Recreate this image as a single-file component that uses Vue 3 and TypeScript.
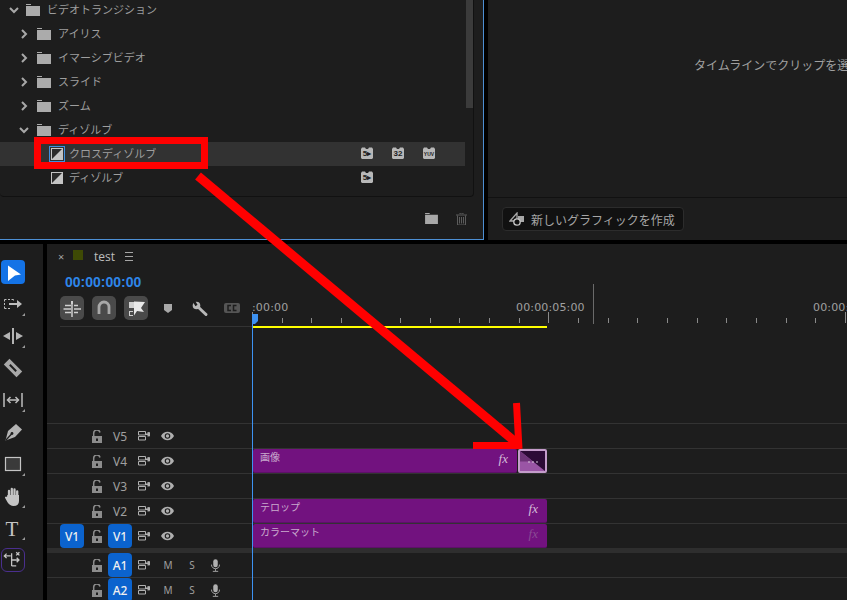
<script setup lang="ts">
interface TreeRow { label: string; level: number; kind: 'open' | 'closed' | 'fx'; selected?: boolean; badges?: string[] }
const tree: TreeRow[] = [
  { label: 'ビデオトランジション', level: 0, kind: 'open' },
  { label: 'アイリス', level: 1, kind: 'closed' },
  { label: 'イマーシブビデオ', level: 1, kind: 'closed' },
  { label: 'スライド', level: 1, kind: 'closed' },
  { label: 'ズーム', level: 1, kind: 'closed' },
  { label: 'ディゾルブ', level: 1, kind: 'open' },
  { label: 'クロスディゾルブ', level: 2, kind: 'fx', selected: true, badges: ['accel', '32', 'YUV'] },
  { label: 'ディゾルブ', level: 2, kind: 'fx', badges: ['accel'] },
]
const tools = [
  { id: 'select', active: true },
  { id: 'track', corner: true },
  { id: 'ripple', corner: true },
  { id: 'razor' },
  { id: 'slip', corner: true },
  { id: 'pen' },
  { id: 'rect', corner: true },
  { id: 'hand', corner: true },
  { id: 'text', corner: true },
  { id: 'mogrt', ring: true },
]
const tickCount = 20
const isLong = (i: number) => i % 10 === 0
const videoTracks = [
  { name: 'V5' }, { name: 'V4' }, { name: 'V3' }, { name: 'V2' }, { name: 'V1', on: true, src: true },
]
const audioTracks = ['A1', 'A2']
</script>

<template>
  <div class="screen">
    <svg class="defs" width="0" height="0" aria-hidden="true">
      <symbol id="folder" viewBox="0 0 14 12"><path d="M0 0h5v1H0zM0 2h14v10H0z" fill="currentColor" /></symbol>
      <symbol id="down" viewBox="0 0 10 10"><path d="M1 3l4 4 4-4" fill="none" stroke="currentColor" stroke-width="2" /></symbol>
      <symbol id="right" viewBox="0 0 10 10"><path d="M3 1l4 4-4 4" fill="none" stroke="currentColor" stroke-width="2" /></symbol>
      <symbol id="fx" viewBox="0 0 12 12"><rect width="12" height="12" fill="#c4c4c4" /><path d="M1 1h10L1 11z" fill="#2a2a2a" /></symbol>
      <symbol id="badge" viewBox="0 0 12 12"><path d="M0 2l1-1.500h3l1 1.500h2l1-1.500h3l1 1.500v9l-1 1H1l-1-1z" fill="#b8b8b8" /></symbol>
      <symbol id="lock" viewBox="0 0 10 13"><path d="M1.700 6V3.500a3.200 3.200 0 0 1 6.300-1" fill="none" stroke="currentColor" stroke-width="1.500" /><path d="M0 6h10v7H0z" fill="currentColor" /><path d="M4 8.500h2v2.500H4z" fill="#1d1d1d" /></symbol>
      <symbol id="film" viewBox="0 0 12 10"><path d="M.5 .5h7v3.500h-7zM.5 5.500h7v3.500h-7z" fill="none" stroke="currentColor" /><path d="M8 2.500h1.500V1L12 1.200v4.100L9.500 5.500V4H8z" fill="currentColor" /></symbol>
      <symbol id="eye" viewBox="0 0 14 10"><path d="M0 5c3-6 11-6 14 0-3 6-11 6-14 0z" fill="currentColor" /><circle cx="7" cy="5" r="3" fill="#1d1d1d" /><circle cx="7" cy="5" r="1.800" fill="currentColor" /></symbol>
      <symbol id="mic" viewBox="0 0 10 14"><rect x="2.500" width="5" height="9" rx="2.500" fill="currentColor" /><path d="M.5 6c0 6 9 6 9 0M5 11v2M2 13.500h6" fill="none" stroke="currentColor" /></symbol>
    </svg>

    <div class="top">
      <section class="effects">
        <div class="tree">
          <div class="tree-list">
            <div v-for="row in tree" :key="row.label + row.level" class="row" :class="[`lv${row.level}`, { selected: row.selected }]">
              <template v-if="row.kind !== 'fx'">
                <svg class="chev"><use :href="row.kind === 'open' ? '#down' : '#right'" /></svg>
                <svg class="folder"><use href="#folder" /></svg>
              </template>
              <svg v-else class="fxicon" :class="{ ringed: row.selected }"><use href="#fx" /></svg>
              <span class="label">{{ row.label }}</span>
              <div v-if="row.badges" class="badges">
                <span v-for="b in row.badges" :key="b" class="badge">
                  <svg class="badge-bg"><use href="#badge" /></svg>
                  <span class="badge-text" :class="{ tiny: b === 'YUV' }">
                    <template v-if="b === 'accel'">5▸</template><template v-else>{{ b }}</template>
                  </span>
                </span>
              </div>
            </div>
          </div>
          <div class="scrolltrack"><div class="thumb"></div></div>
        </div>
        <div class="foot">
          <svg class="foot-folder"><use href="#folder" /></svg>
          <svg class="trash" viewBox="0 0 11 12"><path d="M0 2h11M4 1V0h3v1M1.500 2.500V12h8V2.500M3.500 4v6.500M5.500 4v6.500M7.500 4v6.500" fill="none" stroke="currentColor" /></svg>
        </div>
      </section>
      <section class="monitor">
        <div class="monitor-view"><span class="hint">タイムラインでクリップを選択して編集します</span></div>
        <div class="monitor-foot">
          <button class="newgfx" type="button">
            <svg class="shapes" viewBox="0 0 16 14"><path d="M1 9L8 1v8z" fill="none" stroke="#a8a8a8" stroke-width="1.300" /><rect x="9" y="4" width="6" height="6" fill="#a8a8a8" /><circle cx="8" cy="10" r="3.200" fill="#111" stroke="#c8c8c8" stroke-width="1.300" /></svg>
            <span>新しいグラフィックを作成</span>
          </button>
        </div>
      </section>
    </div>

    <div class="bottom">
      <aside class="tools">
        <div v-for="t in tools" :key="t.id" class="tool" :class="{ active: t.active, ring: t.ring, corner: t.corner }">
          <svg viewBox="0 0 24 24" class="tool-icon">
            <path v-if="t.id === 'select'" d="M7 5.500L20 14.500 14 15.500 7 21z" fill="#fff" />
            <g v-else-if="t.id === 'track'">
              <path d="M3.500 7.500h9M3.500 7.500v9M3.500 16.500h7M12.500 7.500v1" fill="none" stroke="#bdbdbd" stroke-dasharray="2 1.500" />
              <path d="M8 11h8V8l5 4-5 4v-3H8z" fill="#bdbdbd" />
            </g>
            <path v-else-if="t.id === 'ripple'" d="M11 4h2v16h-2zM2 12l7-4v8zM22 12l-7-4v8z" fill="#b4b4b4" />
            <g v-else-if="t.id === 'razor'" transform="rotate(-45 12 12)">
              <rect x="8" y="3" width="8" height="18" fill="#a8a8a8" />
              <rect x="11" y="7.500" width="2" height="9" fill="#1d1d1d" />
            </g>
            <g v-else-if="t.id === 'slip'" fill="none" stroke="#bdbdbd" stroke-width="1.500">
              <path d="M3 5v14M21 5v14M7 12h10" /><path d="M9.500 9L6.500 12l3 3M14.500 9l3 3-3 3" />
            </g>
            <g v-else-if="t.id === 'pen'">
              <path d="M4.500 20.500L7 11 15 4l6 5.500L14 17z" fill="#b4b4b4" />
              <path d="M5 20l5.500-6" stroke="#1d1d1d" stroke-width="1.200" /><circle cx="11" cy="13.500" r="1.400" fill="#1d1d1d" />
            </g>
            <rect v-else-if="t.id === 'rect'" x="4.500" y="5.500" width="15" height="13" fill="#3a3a3a" stroke="#c4c4c4" stroke-width="1.200" />
            <g v-else-if="t.id === 'hand'" stroke="#c4c4c4" fill="none" stroke-linecap="round">
              <path d="M8 13V7M10.800 12V5M13.500 12V5.500M16.200 13V7.500" stroke-width="2.300" />
              <path d="M7 12h10v5c0 2.500-2 4-4.500 4S8.500 19.500 7.500 18L5 13.500" fill="#c4c4c4" stroke-width="2" />
            </g>
            <text v-else-if="t.id === 'text'" x="4.500" y="20" class="t-glyph">T</text>
            <g v-else-if="t.id === 'mogrt'" fill="none" stroke="#c4c4c4" stroke-width="1.400">
              <path d="M2.500 7.500h7M5 5L2.500 7.500 5 10M10.500 4.500v14M10.500 12h8M16 9.500l2.500 2.500-2.500 2.500M10.500 18.500h5M15.500 3.500l3.500 3.500M19 3.500L15.500 7" />
            </g>
          </svg>
        </div>
      </aside>

      <section class="timeline">
        <header class="title">
          <span class="close">×</span>
          <span class="swatch"></span>
          <span class="seq">test</span>
          <span class="burger"></span>
        </header>
        <div class="timecode">00:00:00:00</div>

        <div class="toolbar">
          <div class="tbuttons">
            <span class="tb on">
              <svg viewBox="0 0 24 24"><path d="M12 5v3" stroke="#d0d0d0" stroke-width="2" /><path d="M12 8v13M5 9.500h6M14 9.500h4M3.500 13h7.500M14 13h7M5 16.500h6M14 16.500h4" stroke="#d0d0d0" stroke-width="1.500" fill="none" /></svg>
            </span>
            <span class="tb on">
              <svg viewBox="0 0 24 24"><path d="M7 18v-7a5 5 0 0 1 10 0v7" fill="none" stroke="#a8a8a8" stroke-width="2.800" /></svg>
            </span>
            <span class="tb on">
              <svg viewBox="0 0 24 24"><path d="M5 6h5v6H5zM5 15h1v5H5zM5 15h4v1H5zM5 19h4v1H5z" fill="#d0d0d0" /><path d="M10 5.500l11 .5-4 6 3 4-7-1-3 4.500z" fill="#e8e8e8" /></svg>
            </span>
            <span class="tb">
              <svg viewBox="0 0 24 24"><path d="M8 8h8v6l-4 3-4-3z" fill="#a8a8a8" /></svg>
            </span>
            <span class="tb">
              <svg viewBox="0 0 24 24"><path d="M8.500 9.500L18 18.500" stroke="#b8b8b8" stroke-width="3" stroke-linecap="round" /><circle cx="8.500" cy="9.500" r="3.800" fill="#b8b8b8" /><path d="M8.500 9.500L6 5.500" stroke="#1d1d1d" stroke-width="2.400" /></svg>
            </span>
            <span class="tb">
              <svg viewBox="0 0 24 24"><rect x="4" y="7" width="16" height="10" rx="2" fill="#555" /><path d="M11 9.500H8v5h3M16.500 9.500h-3v5h3" stroke="#1d1d1d" stroke-width="1.500" fill="none" /></svg>
            </span>
          </div>
          <div class="ruler">
            <div class="stamps">
              <span class="stamp first">:00:00</span>
              <span class="stamp second">00:00:05:00</span>
              <span class="stamp third">00:00:10:00</span>
            </div>
            <div class="workarea"></div>
            <div class="ticks">
              <span v-for="i in tickCount + 1" :key="i" class="tick-cell">
                <span class="tick" :class="{ long: isLong(i - 1) }"></span>
              </span>
            </div>
            <span class="zoomline"></span>
            <span class="playhead-head"></span>
          </div>
        </div>

        <div class="stage"></div>

        <div class="tracks">
          <div v-for="t in videoTracks" :key="t.name" class="track">
            <div class="thead">
              <span class="srcslot"><span v-if="t.src" class="patch">V1</span></span>
              <svg class="lock"><use href="#lock" /></svg>
              <span class="tname" :class="{ patch: t.on }">{{ t.name }}</span>
              <svg class="film"><use href="#film" /></svg>
              <svg class="eye"><use href="#eye" /></svg>
            </div>
            <div class="lane">
              <template v-if="t.name === 'V4'">
                <div class="clip short"><span class="clip-name">画像</span><i class="fx">fx</i></div>
                <div class="transition">
                  <svg viewBox="0 0 25 20" preserveAspectRatio="none"><rect width="25" height="20" fill="#2c0a36" /><path d="M0 0l25 20H0z" fill="#9a55a5" /><path d="M0 0l13 10.500H0z" fill="#6e3478" /><path d="M8 11h2M12 11h2M16 11h2" stroke="#d8c8dc" stroke-width="1" /></svg>
                </div>
              </template>
              <div v-if="t.name === 'V2'" class="clip"><span class="clip-name">テロップ</span><i class="fx">fx</i></div>
              <div v-if="t.name === 'V1'" class="clip"><span class="clip-name">カラーマット</span><i class="fx dim">fx</i></div>
            </div>
          </div>
          <div class="band"></div>
          <div v-for="a in audioTracks" :key="a" class="track audio">
            <div class="thead">
              <span class="srcslot"></span>
              <svg class="lock"><use href="#lock" /></svg>
              <span class="tname patch">{{ a }}</span>
              <svg class="film"><use href="#film" /></svg>
              <span class="ms">M</span>
              <span class="ms">S</span>
              <svg class="mic"><use href="#mic" /></svg>
            </div>
            <div class="lane"></div>
          </div>
        </div>
        <span class="playhead"></span>
      </section>
    </div>

    <svg class="annotation" viewBox="0 0 847 600">
      <rect x="37.500" y="140.500" width="167" height="25" fill="none" stroke="#ff0000" stroke-width="7" />
      <path d="M198 176L519 445" fill="none" stroke="#ff0000" stroke-width="9" />
      <path d="M473 445.500H522M516.500 403L519 449" fill="none" stroke="#ff0000" stroke-width="7" />
    </svg>
  </div>
</template>

<style scoped>
.screen {
  position: relative;
  width: 847px;
  height: 600px;
  overflow: hidden;
  background: #000;
  color: #a6a6a6;
  font-family: "Noto Sans CJK JP", "Noto Sans", sans-serif;
  font-size: 12px;
  display: flex;
  flex-direction: column;
}
.defs { position: absolute; }
svg { display: block; }

.top { height: 244px; display: flex; flex: none; padding-bottom: 4px; box-sizing: border-box; gap: 4px; }
.effects {
  width: 484px; flex: none; box-sizing: border-box; height: 240px;
  background: #1d1d1d; border-right: 1px solid #4d8fd4; border-bottom: 1px solid #4d8fd4;
  display: flex; flex-direction: column;
}
.tree {
  height: 197px; flex: none; box-sizing: border-box; display: flex; overflow: hidden;
  width: 474px; border-right: 1px solid #111; border-bottom: 1px solid #111; border-bottom-right-radius: 4px; border-bottom-left-radius: 4px;
}
.tree-list { width: 465px; flex: none; margin-top: -2px; }
.scrolltrack { flex: 1; display: flex; justify-content: center; }
.thumb { width: 7px; height: 108px; background: #3b3b3b; }
.row { height: 24px; display: flex; align-items: center; color: #9e9e9e; font-size: 11px; }
.row.selected { background: #323232; }
.chev { width: 10px; height: 10px; color: #a8a8a8; flex: none; }
.folder { width: 14px; height: 12px; color: #ababab; flex: none; margin-left: 6px; margin-right: 7px; }
.lv0 { padding-left: 9px; }
.lv1 { padding-left: 19px; }
.lv2 { padding-left: 51px; }
.lv0 .folder { margin-left: 7px; }
.lv1 .folder { margin-left: 8px; }
.fxicon { width: 12px; height: 12px; flex: none; margin-right: 6px; }
.fxicon.ringed { outline: 1px solid #3f8fe0; outline-offset: 1px; }
.label { white-space: nowrap; line-height: 1; margin-top: -2px; }
.badges { margin-left: auto; margin-right: 30px; display: flex; gap: 19px; }
.row:not(.selected) .badges { margin-right: 92px; }
.badge { position: relative; width: 12px; height: 12px; display: block; margin-top: -2px; }
.badge-bg { width: 12px; height: 12px; }
.badge-text {
  position: absolute; inset: 2px 0 0; text-align: center; color: #1d1d1d; font: 700 8px/10px "Liberation Sans", sans-serif; white-space: nowrap;
}
.badge-text.tiny { font-size: 5px; }
.foot { flex: 1; display: flex; align-items: center; justify-content: flex-end; gap: 18px; padding-right: 16px; padding-top: 1px; }
.foot-folder { width: 13px; height: 11px; color: #a8a8a8; }
.trash { width: 11px; height: 12px; color: #5c5c5c; }

.monitor { flex: 1; height: 240px; background: #1d1d1d; display: flex; flex-direction: column; min-width: 0; }
.monitor-view { height: 198px; box-sizing: border-box; flex: none; border-bottom: 1px solid #111; padding: 56px 0 0 206px; overflow: hidden; white-space: nowrap; color: #a0a0a0; }
.hint { line-height: 18px; display: block; }
.monitor-foot { padding: 9px 0 0 14px; }
.newgfx {
  height: 24px; width: 182px; box-sizing: border-box; padding: 0 0 0 6px;
  background: #111; border: 1px solid #2c2c2c; border-radius: 4px;
  display: flex; align-items: center; gap: 6px; color: #a6a6a6; font: inherit; white-space: nowrap;
}
.shapes { width: 16px; height: 14px; flex: none; }

.bottom { flex: 1; display: flex; gap: 4px; min-height: 0; }
.tools { width: 43px; flex: none; background: #1d1d1d; padding: 16px 0 0 1px; box-sizing: border-box; display: flex; flex-direction: column; gap: 8px; }
.tool { width: 24px; height: 24px; flex: none; position: relative; box-sizing: border-box; border-radius: 4px; }
.tool.active { background: #1473e6; }
.tool.ring { border: 1px solid #4a2f8e; border-radius: 6px; }
.tool.corner::after {
  content: ""; position: absolute; right: 0; bottom: 0; border-style: solid; border-width: 0 0 3px 3px;
  border-color: transparent transparent #9a9a9a transparent;
}
.tool-icon { width: 24px; height: 24px; }
.tool.ring .tool-icon { width: 22px; height: 22px; }
.t-glyph { font: 400 21px "Liberation Serif", serif; fill: #c4c4c4; }

.timeline { flex: 1; background: #1d1d1d; position: relative; display: flex; flex-direction: column; min-width: 0; overflow: hidden; }
.title { height: 24px; flex: none; display: flex; align-items: center; padding-left: 11px; color: #bdbdbd; font-family: "Open Sans", sans-serif; }
.close { width: 15px; font-size: 11px; color: #a6a6a6; }
.swatch { width: 10px; height: 10px; background: #3e4a05; margin-top: -2px; }
.seq { margin-left: 11px; font-size: 12px; }
.burger { width: 8px; height: 7px; margin-left: 10px; border-top: 1px solid #a6a6a6; border-bottom: 1px solid #a6a6a6; position: relative; }
.burger::after { content: ""; position: absolute; left: 0; right: 0; top: 3px; border-top: 1px solid #a6a6a6; }
.timecode { height: 28px; flex: none; box-sizing: border-box; padding: 4px 0 0 18px; color: #2e86ea; font: 700 14px/20px "Liberation Sans", sans-serif; }
.toolbar { height: 32px; flex: none; display: flex; }
.tbuttons { flex: none; box-sizing: border-box; margin-left: 13px; width: 192px; height: 31px; border-bottom: 1px solid #333; display: flex; gap: 8px; }
.tb { width: 24px; height: 24px; border-radius: 5px; display: block; flex: none; }
.tb.on { background: #4a4a4a; }
.tb svg { width: 24px; height: 24px; }
.ruler { flex: 1; position: relative; }
.stamps { display: flex; height: 18px; margin-top: 3px; color: #a0a0a0; font: 11px/18px "DejaVu Sans", sans-serif; white-space: nowrap; letter-spacing: .15px; }
.stamp { display: block; }
.stamp.first { width: 264px; box-sizing: border-box; }
.stamp.second { width: 297px; }
.workarea { position: absolute; left: 1px; top: 30px; width: 294px; height: 2px; background: #ffff00; }
.ticks { position: absolute; left: 0; top: 16px; display: flex; align-items: flex-end; height: 11px; }
.tick-cell { width: 29.650px; flex: none; height: 11px; display: flex; align-items: flex-end; }
.tick { width: 1px; height: 5px; background: #8a8a8a; display: block; }
.tick.long { height: 11px; }
.zoomline { position: absolute; left: 341px; top: -12px; width: 1px; height: 40px; background: #6a6a6a; }
.playhead-head { position: absolute; left: 0; top: 18px; width: 6px; height: 10px; background: #3d92f2; clip-path: polygon(0 0, 100% 0, 100% 70%, 50% 100%, 0 100%); }
.stage { height: 95px; flex: none; }
.tracks { flex: none; }
.track { height: 25px; box-sizing: border-box; border-top: 1px solid #333; display: flex; }
.band { height: 5px; background: #2e2e2e; }
.band + .track { border-top: 0; height: 24px; }
.thead { width: 205px; flex: none; display: flex; align-items: center; color: #a0a0a0; padding-left: 13px; box-sizing: border-box; font: 11px "Noto Sans", sans-serif; }
.srcslot { width: 24px; height: 24px; display: block; margin-right: 8px; flex: none; }
.patch { display: flex; align-items: center; justify-content: center; width: 24px; height: 24px; background: #0b63ce; border-radius: 4px; color: #f0f0f0; font: 500 12px "Noto Sans", sans-serif; }
.lock { width: 10px; height: 13px; color: #8c8c8c; flex: none; margin-right: 6px; }
.tname { width: 24px; flex: none; text-align: center; font-size: 12px; }
.tname.patch { display: flex; }
.film { width: 12px; height: 10px; margin-left: 6px; flex: none; color: #b0b0b0; }
.eye { width: 13px; height: 10px; margin-left: 11px; flex: none; color: #b0b0b0; }
.ms { width: 24px; text-align: center; flex: none; font-size: 10px; }
.film + .ms { margin-left: 6px; }
.mic { width: 9px; height: 13px; color: #b0b0b0; flex: none; margin-left: 7px; }
.lane { flex: 1; display: flex; padding-left: 1px; min-width: 0; }
.clip {
  width: 294px; height: 24px; box-sizing: border-box; background: #72127f; border-radius: 2px; display: flex; justify-content: space-between;
  padding: 1px 9px 0 7px; color: #c9aacd; font-size: 10px; line-height: 14px; border-bottom: 1px solid #5d1068;
}
.clip-name { white-space: nowrap; }
.fx { font: italic 13px/17px "Liberation Serif", serif; color: #d4bcd8; }
.fx.dim { color: #8a4a94; }
.clip.short { width: 264px; }
.transition { width: 29px; height: 24px; margin-left: 1px; box-sizing: border-box; border: 2px solid #c49ccb; border-radius: 2px; overflow: hidden; }
.transition svg { width: 25px; height: 20px; }
.playhead { position: absolute; left: 205px; top: 80px; bottom: 0; width: 1px; background: #3d92f2; }
.annotation { position: absolute; inset: 0; width: 847px; height: 600px; pointer-events: none; }
</style>
